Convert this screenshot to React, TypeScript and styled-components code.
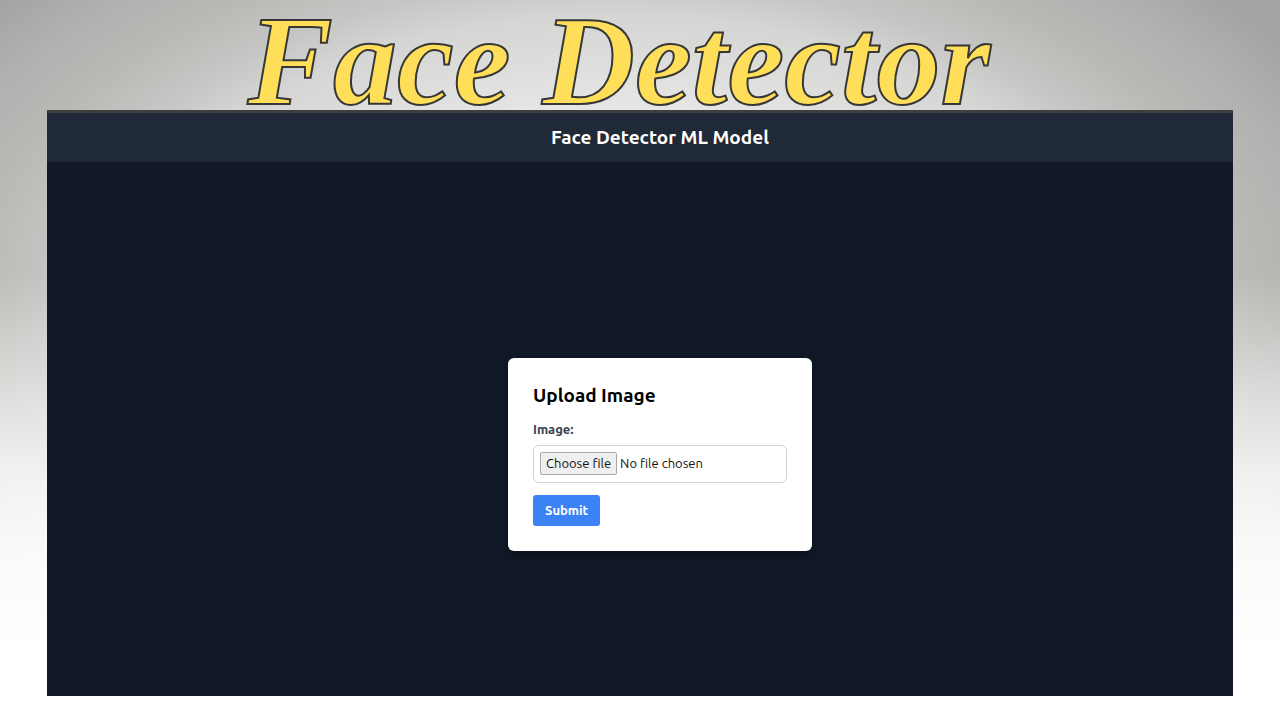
import React from "react";
import styled, { createGlobalStyle } from "styled-components";

const GlobalStyle = createGlobalStyle`
  * { box-sizing: border-box; }
  body {
    margin: 0;
    font-family: Ubuntu, "Noto Sans", "Open Sans", sans-serif;
  }
`;

const Page = styled.div`
  min-height: 100vh;
  display: flex;
  flex-direction: column;
  padding: 0 47px 24px;
  background:
    linear-gradient(to bottom, rgba(255, 255, 255, 0) 38%, rgba(255, 255, 255, 0.2) 45%, rgba(255, 255, 255, 0.5) 54%, rgba(255, 255, 255, 0.8) 65%, rgba(255, 255, 255, 0.94) 76%, #fff 90%),
    radial-gradient(ellipse 62% 61% at 48% 40%, #ebebea 30%, #e5e5e4 42%, #d5d5d4 62%, #c6c6c5 70%, #b9bab5 80%, #b1b1b1 90%, #a5a5a3 100%);
`;

const Title = styled.h1`
  margin: 0;
  height: 110px;
  padding-right: 42px;
  text-align: center;
  white-space: nowrap;
  font: italic bold 128px/122px "Liberation Serif", serif;
  color: #ffde59;
  -webkit-text-stroke: 2px #373737;
`;

const Panel = styled.section`
  flex: 1;
  display: flex;
  flex-direction: column;
  background: #111827;
  border-top: 3px solid #3c3f40;
`;

const PanelHeader = styled.header`
  padding: 10px 0 11px 40px;
  background: #1f2937;
  text-align: center;
`;

const PanelTitle = styled.h2`
  margin: 0;
  font-size: 19px;
  line-height: 28px;
  font-weight: 700;
  color: #fff;
`;

const PanelBody = styled.main`
  flex: 1;
  display: flex;
  align-items: center;
  justify-content: center;
  padding: 50px 0 0 40px;
`;

const Card = styled.form`
  width: 304px;
  padding: 25px;
  display: flex;
  flex-direction: column;
  align-items: flex-start;
  background: #fff;
  border-radius: 6px;
  box-shadow: 0 4px 10px rgba(0, 0, 0, 0.3);
`;

const CardTitle = styled.h3`
  margin: 0 0 12px;
  font-size: 19px;
  line-height: 25px;
  font-weight: 700;
  color: #000;
`;

const FieldLabel = styled.label`
  margin-bottom: 6px;
  font-size: 13px;
  line-height: 19px;
  font-weight: 700;
  color: #374151;
`;

const FileBox = styled.label`
  position: relative;
  width: 100%;
  height: 38px;
  margin-bottom: 12px;
  padding: 0 6px;
  display: flex;
  align-items: center;
  gap: 3px;
  border: 1px solid #d1d5db;
  border-radius: 6px;
  font-size: 13px;
  line-height: 19px;
  color: #111;
`;

const FileInput = styled.input`
  position: absolute;
  inset: 0;
  width: 100%;
  opacity: 0;
`;

const FileButton = styled.span`
  padding: 1px 5px;
  border: 1px solid #a8a8a8;
  border-radius: 2px;
  background: #efefef;
`;

const SubmitButton = styled.button`
  height: 31px;
  padding: 0 12px;
  border: 0;
  border-radius: 3px;
  background: #3b82f6;
  color: #fff;
  font-family: inherit;
  font-size: 13px;
  line-height: 19px;
  font-weight: 700;
`;

export default function App() {
  const [fileName, setFileName] = React.useState("No file chosen");
  return (
    <Page>
      <GlobalStyle />
      <Title>Face Detector</Title>
      <Panel>
        <PanelHeader>
          <PanelTitle>Face Detector ML Model</PanelTitle>
        </PanelHeader>
        <PanelBody>
          <Card onSubmit={(e) => e.preventDefault()}>
            <CardTitle>Upload Image</CardTitle>
            <FieldLabel htmlFor="image">Image:</FieldLabel>
            <FileBox>
              <FileButton>Choose file</FileButton>
              <span>{fileName}</span>
              <FileInput
                id="image"
                type="file"
                accept="image/*"
                onChange={(e) => setFileName(e.target.files?.[0]?.name ?? "No file chosen")}
              />
            </FileBox>
            <SubmitButton type="submit">Submit</SubmitButton>
          </Card>
        </PanelBody>
      </Panel>
    </Page>
  );
}
